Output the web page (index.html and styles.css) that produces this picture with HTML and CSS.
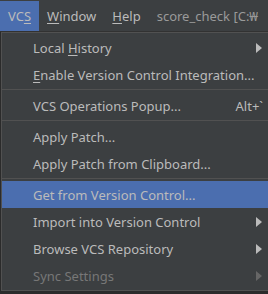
FILE: index.html
```html
<!DOCTYPE html>
<html lang="en">
<head>
  <meta charset="UTF-8">
  <title>VCS menu</title>
  <link rel="stylesheet" href="styles.css">
</head>
<body>

  <div class="menubar">
    <span class="menu active">VC<u>S</u></span>
    <span class="menu"><u>W</u>indow</span>
    <span class="menu"><u>H</u>elp</span>
    <span class="title">score_check [C:₩</span>
  </div>

  <div class="popup">
    <div class="item">
      <span>Local <u>H</u>istory</span>
      <span class="arrow"></span>
    </div>
    <div class="item">
      <span><u>E</u>nable Version Control Integration...</span>
    </div>
    <div class="sep"></div>
    <div class="item">
      <span>VCS Operations Popup...</span>
      <span class="key">Alt+`</span>
    </div>
    <div class="sep"></div>
    <div class="item">
      <span>Apply Patch...</span>
    </div>
    <div class="item">
      <span>Apply Patch from Clipboard...</span>
    </div>
    <div class="sep"></div>
    <div class="item selected">
      <span>Get from Version Control...</span>
    </div>
    <div class="item">
      <span>Import into Version Control</span>
      <span class="arrow"></span>
    </div>
    <div class="item">
      <span>Browse VCS Repository</span>
      <span class="arrow"></span>
    </div>
    <div class="item disabled">
      <span>Sync Settings</span>
      <span class="arrow"></span>
    </div>
  </div>

</body>
</html>
```

FILE: styles.css
```css
body {
  margin: 0;
  width: 268px;
  height: 294px;
  overflow: hidden;
  background: #2b2b2b;
  font-family: "Noto Sans", sans-serif;
  font-size: 13px;
  color: #bbbbbb;
}

u {
  text-decoration-thickness: 1px;
  text-underline-offset: 2px;
}

.menubar {
  display: flex;
  align-items: center;
  height: 32px;
  padding-top: 1px;
  box-sizing: border-box;
  background: #3c3f41;
  border-bottom: 1px solid #323232;
  white-space: nowrap;
}

.menu {
  display: flex;
  align-items: center;
  height: 100%;
  padding: 0 8px;
}

.menu.active {
  background: #4b6eaf;
}

.title {
  margin-left: 8px;
  color: #9a9a9a;
}

.popup {
  width: 270px;
  margin-left: 1px;
  padding: 1px 0;
  background: #3c3f41;
  border: 1px solid #515151;
}

.item {
  display: flex;
  align-items: center;
  justify-content: space-between;
  height: 27px;
  padding: 0 9px 0 31px;
  white-space: nowrap;
}

.item.selected {
  background: #4b6eaf;
}

.item.disabled {
  color: #777777;
}

.arrow {
  width: 0;
  height: 0;
  margin-right: 1px;
  border-top: 5px solid transparent;
  border-bottom: 5px solid transparent;
  border-left: 6px solid #bbbbbb;
}

.disabled .arrow {
  border-left-color: #666666;
}

.sep {
  height: 1px;
  margin: 1px 0 2px;
  background: #515151;
}
```
